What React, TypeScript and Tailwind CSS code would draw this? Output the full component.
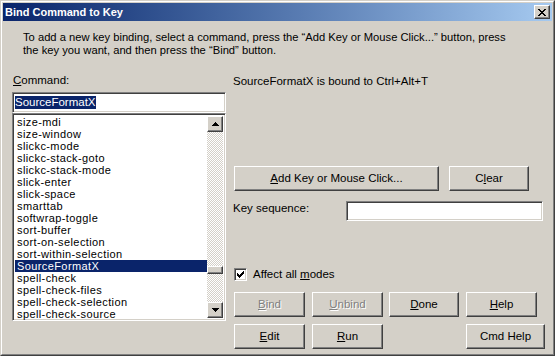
const items = [
  "size-mdi",
  "size-window",
  "slickc-mode",
  "slickc-stack-goto",
  "slickc-stack-mode",
  "slick-enter",
  "slick-space",
  "smarttab",
  "softwrap-toggle",
  "sort-buffer",
  "sort-on-selection",
  "sort-within-selection",
  "SourceFormatX",
  "spell-check",
  "spell-check-files",
  "spell-check-selection",
  "spell-check-source",
];

const raised =
  "border border-t-white border-l-white border-r-[#404040] border-b-[#404040] shadow-[inset_-1px_-1px_#808080] bg-[#d4d0c8]";
const sunken =
  "border border-t-[#808080] border-l-[#808080] border-r-white border-b-white shadow-[inset_1px_1px_#404040,inset_-1px_-1px_#d4d0c8]";

function Btn({
  children,
  className = "",
  disabled = false,
}: {
  children: React.ReactNode;
  className?: string;
  disabled?: boolean;
}) {
  return (
    <div
      className={`${raised} h-[25px] flex items-center justify-center ${
        disabled ? "text-[#808080] [text-shadow:1px_1px_#fff]" : "text-black"
      } ${className}`}
    >
      {children}
    </div>
  );
}

function Arrow({ up }: { up: boolean }) {
  return (
    <div className={`${raised} w-[16px] h-[16px] flex items-center justify-center`}>
      <svg width="7" height="4" viewBox="0 0 7 4" shapeRendering="crispEdges">
        {up ? (
          <>
            <rect x="3" y="0" width="1" height="1" fill="#000" />
            <rect x="2" y="1" width="3" height="1" fill="#000" />
            <rect x="1" y="2" width="5" height="1" fill="#000" />
            <rect x="0" y="3" width="7" height="1" fill="#000" />
          </>
        ) : (
          <>
            <rect x="0" y="0" width="7" height="1" fill="#000" />
            <rect x="1" y="1" width="5" height="1" fill="#000" />
            <rect x="2" y="2" width="3" height="1" fill="#000" />
            <rect x="3" y="3" width="1" height="1" fill="#000" />
          </>
        )}
      </svg>
    </div>
  );
}

export default function App() {
  return (
    <div
      className="w-[555px] h-[356px] bg-[#d4d0c8] border border-[#d4d0c8] border-r-[#404040] border-b-[#404040] text-[11.5px] text-black"
      style={{ fontFamily: '"Liberation Sans", Arial, sans-serif' }}
    >
      <div className="h-full border border-white border-r-[#808080] border-b-[#808080] p-px flex flex-col">
        {/* title bar */}
        <div className="h-[18px] bg-linear-to-r from-[#0a246a] to-[#a6caf0] flex items-center justify-between pl-[2px] pr-[2px]">
          <span className="text-white font-bold text-[11px]">Bind Command to Key</span>
          <div className={`${raised} w-[16px] h-[14px] flex items-center justify-center`}>
            <svg width="8" height="7" viewBox="0 0 8 7" shapeRendering="crispEdges">
              <rect x="0" y="0" width="2" height="1" />
              <rect x="6" y="0" width="2" height="1" />
              <rect x="1" y="1" width="2" height="1" />
              <rect x="5" y="1" width="2" height="1" />
              <rect x="2" y="2" width="4" height="1" />
              <rect x="3" y="3" width="2" height="1" />
              <rect x="2" y="4" width="4" height="1" />
              <rect x="1" y="5" width="2" height="1" />
              <rect x="5" y="5" width="2" height="1" />
              <rect x="0" y="6" width="2" height="1" />
              <rect x="6" y="6" width="2" height="1" />
            </svg>
          </div>
        </div>

        {/* body */}
        <div className="flex-1 flex flex-col">
          <p className="mt-[10px] pl-[20px] leading-[13px] text-[11.2px] whitespace-nowrap">
            To add a new key binding, select a command, press the “Add Key or Mouse Click...” button, press
            <br />
            the key you want, and then press the “Bind” button.
          </p>

          <div className="mt-[17px] pl-[9px] flex gap-[7px]">
            {/* left column */}
            <div className="w-[214px] flex flex-col">
              <div className="pl-px leading-[12px] h-[12px]">
                <u>C</u>ommand:
              </div>
              <div className={`${sunken} mt-[6px] h-[21px] bg-white pl-[2px] pt-px`}>
                <span className="bg-[#0a246a] text-white leading-[13px] inline-block">SourceFormatX</span>
              </div>
              <div className={`${sunken} h-[208px] bg-white flex p-[2px]`}>
                <div className="flex-1 flex flex-col text-[11px] tracking-[0.4px]">
                  {items.map((it) => (
                    <div
                      key={it}
                      className={`h-[12px] leading-[12px] pl-[2px] whitespace-nowrap ${
                        it === "SourceFormatX" ? "bg-[#0a246a] text-white" : ""
                      }`}
                    >
                      {it}
                    </div>
                  ))}
                </div>
                <div className="w-[16px] flex flex-col">
                  <Arrow up />
                  <div className="flex-1 flex flex-col bg-[repeating-conic-gradient(#fff_0_25%,#d4d0c8_0_50%)] bg-[length:2px_2px]">
                    <div className="h-[134px]" />
                    <div className={`${raised} h-[8px]`} />
                  </div>
                  <Arrow up={false} />
                </div>
              </div>
            </div>

            {/* right column */}
            <div className="flex-1 flex flex-col">
              <div className="mt-px leading-[12px] h-[12px]">SourceFormatX is bound to Ctrl+Alt+T</div>

              <div className="mt-[79px] flex pl-px">
                <Btn className="w-[205px]">
                  <u>A</u>dd Key or Mouse Click...
                </Btn>
                <Btn className="w-[80px] ml-[10px]">
                  C<u>l</u>ear
                </Btn>
              </div>

              <div className="mt-[10px] flex items-start">
                <div className="w-[113px] mt-px leading-[12px]">Key sequence:</div>
                <div className={`${sunken} w-[197px] h-[20px] bg-white`} />
              </div>

              <div className="mt-[45px] flex items-center pl-px">
                <div className={`${sunken} w-[13px] h-[13px] bg-white flex items-center justify-center`}>
                  <svg width="7" height="7" viewBox="0 0 7 7" shapeRendering="crispEdges">
                    <rect x="6" y="0" width="1" height="1" />
                    <rect x="5" y="1" width="2" height="1" />
                    <rect x="0" y="2" width="1" height="1" />
                    <rect x="4" y="2" width="3" height="1" />
                    <rect x="0" y="3" width="2" height="1" />
                    <rect x="3" y="3" width="3" height="1" />
                    <rect x="0" y="4" width="5" height="1" />
                    <rect x="1" y="5" width="3" height="1" />
                    <rect x="2" y="6" width="1" height="1" />
                  </svg>
                </div>
                <span className="ml-[6px]">
                  Affect all <u>m</u>odes
                </span>
              </div>

              <div className="mt-[9px] flex pl-px">
                <Btn disabled className="w-[71px]">
                  <u>B</u>ind
                </Btn>
                <Btn disabled className="w-[71px] ml-[7px]">
                  <u>U</u>nbind
                </Btn>
                <Btn className="w-[70px] ml-[6px]">
                  <u>D</u>one
                </Btn>
                <Btn className="w-[71px] ml-[7px]">
                  <u>H</u>elp
                </Btn>
              </div>

              <div className="mt-[7px] flex pl-px">
                <Btn className="w-[71px]">
                  <u>E</u>dit
                </Btn>
                <Btn className="w-[71px] ml-[7px]">
                  <u>R</u>un
                </Btn>
                <Btn className="w-[79px] ml-[83px]">Cmd Help</Btn>
              </div>
            </div>
          </div>
        </div>
      </div>
    </div>
  );
}
